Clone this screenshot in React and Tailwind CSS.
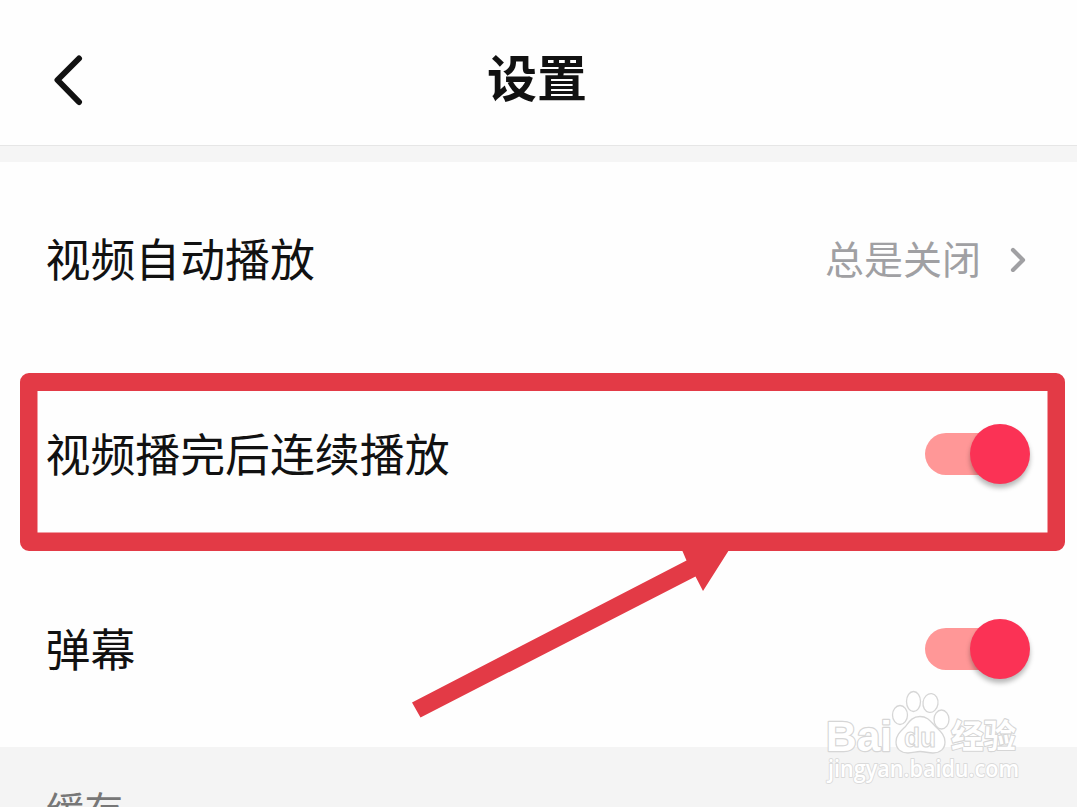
// src/pages/PlaybackSettings.jsx
import { useState } from "react";

const INITIAL = { continuous: true, danmaku: true };

/** Material style switch, the thumb is larger than the track */
const Toggle = ({ on, onChange, label }) => (
  <button
    type="button"
    role="switch"
    aria-checked={on}
    aria-label={label}
    onClick={() => onChange(!on)}
    className={`mr-px flex h-[60px] w-[105px] shrink-0 items-center ${on ? "justify-end" : "justify-start"}`}
  >
    <span
      className={`-mr-[75px] h-[42px] w-[75px] shrink-0 rounded-full ${on ? "bg-[#ff9797]" : "bg-gray-300"}`}
    />
    <span
      className={`relative ml-[45px] size-[60px] shrink-0 rounded-full shadow-[0_4px_5px_rgba(0,0,0,0.28)] ${
        on ? "bg-[#fb3255]" : "bg-white"
      }`}
    />
  </button>
);

const Row = ({ title, children }) => (
  <div className="flex h-[195px] items-center justify-between pr-[46px] pb-px pl-[45.5px]">
    <span className="pb-px text-[44.9px] leading-none">{title}</span>
    {children}
  </div>
);

/** Red frame and arrow pointing at the highlighted row */
const Callout = () => (
  <svg
    className="pointer-events-none absolute top-0 left-0"
    width="1077"
    height="807"
    viewBox="0 0 1077 807"
    fill="#e33a46"
  >
    <path
      fillRule="evenodd"
      d="M29 373H1056a9 9 0 0 1 9 9V542a9 9 0 0 1-9 9H29a9 9 0 0 1-9-9V382a9 9 0 0 1 9-9ZM37.500 391V532.500H1047.500V391Z"
    />
    <path d="M412 702.500 686.500 560.500 682 550H729L703 591 695.500 576.500 420.500 717.500Z" />
  </svg>
);

const Watermark = () => (
  <svg
    className="pointer-events-none absolute top-[685px] left-[820px]"
    width="210"
    height="105"
    viewBox="820 685 210 105"
    fill="#fff"
    stroke="#d6d6d6"
    strokeWidth="1.3"
    strokeLinejoin="round"
  >
    <g className="font-['Liberation_Sans','Noto_Sans_CJK_SC',sans-serif] font-bold" paintOrder="stroke">
      <text x="826" y="751" fontSize="43" textLength="66" lengthAdjust="spacingAndGlyphs" strokeWidth="2.4">
        Bai
      </text>
      <text x="951" y="748" fontSize="33" textLength="65" lengthAdjust="spacingAndGlyphs" strokeWidth="2.2">
        经验
      </text>
    </g>
    <ellipse cx="900" cy="715" rx="7.500" ry="9.500" />
    <ellipse cx="913.500" cy="701.500" rx="7" ry="10" />
    <ellipse cx="930.500" cy="703" rx="7.500" ry="9.500" transform="rotate(8 930.500 703)" />
    <ellipse cx="941.500" cy="719.500" rx="7.500" ry="9.500" />
    <path d="M920 716.500C912 716.500 909 722 905 727C901 731 896 735 896 742C896 749 901 753 908 753C913 753 916 751.500 920 751.500C925 751.500 928 753 933 753C940 753 945 749 945 742C945 735 940 731 936 727C931 722 928 716.500 920 716.500Z" />
    <text
      x="904"
      y="747"
      fontSize="27"
      textLength="32"
      lengthAdjust="spacingAndGlyphs"
      className="font-['Liberation_Sans',sans-serif] font-bold"
      strokeWidth="1.1"
    >
      du
    </text>
    <text
      x="828"
      y="777"
      fontSize="22.5"
      textLength="191"
      lengthAdjust="spacingAndGlyphs"
      className="font-['Open_Sans',sans-serif] font-semibold"
      stroke="#dadada"
      strokeWidth="1.8"
      paintOrder="stroke"
    >
      jingyan.baidu.com
    </text>
  </svg>
);

export default function PlaybackSettings() {
  const [settings, setSettings] = useState(INITIAL);

  const update = (key) => (value) => setSettings((s) => ({ ...s, [key]: value }));

  return (
    <div className="relative h-[807px] w-[1077px] overflow-hidden bg-[#fefefe] font-['Noto_Sans_CJK_SC',sans-serif] text-[#111]">
      {/* Header */}
      <header className="grid h-[146px] grid-cols-[1fr_auto_1fr] items-center border-b border-[#e6e6e6] pt-3.5">
        <button type="button" aria-label="返回" className="ml-[50px] w-9">
          <svg width="36" height="52" viewBox="0 0 36 52" fill="none" stroke="#111" strokeWidth="6" strokeLinecap="round" strokeLinejoin="round">
            <path d="M29 4.500 7.500 26 29 48" />
          </svg>
        </button>
        <h1 className="pr-[3px] pb-[9px] text-[50px] leading-none font-bold">设置</h1>
      </header>
      <div className="h-4 bg-[#f5f5f5]" />

      {/* Playback */}
      <main>
        <Row title="视频自动播放">
          <div className="flex items-center gap-[29px] pr-[5px] text-[#a0a0a3]">
            <span className="pb-[3px] text-[39px] leading-none">总是关闭</span>
            <svg width="16" height="26" viewBox="0 0 16 26" fill="none" stroke="currentColor" strokeWidth="4.2" strokeLinecap="round" strokeLinejoin="round">
              <path d="M3 4 13 14 3 24" />
            </svg>
          </div>
        </Row>
        <Row title="视频播完后连续播放">
          <Toggle label="视频播完后连续播放" on={settings.continuous} onChange={update("continuous")} />
        </Row>
        <Row title="弹幕">
          <Toggle label="弹幕" on={settings.danmaku} onChange={update("danmaku")} />
        </Row>
      </main>

      {/* Cache */}
      <section className="h-[60px] overflow-hidden bg-[#f4f4f4] pt-[42px] pl-[46px]">
        <h2 className="text-[38.5px] leading-none text-[#777]">缓存</h2>
      </section>

      <Callout />
      <Watermark />
    </div>
  );
}
